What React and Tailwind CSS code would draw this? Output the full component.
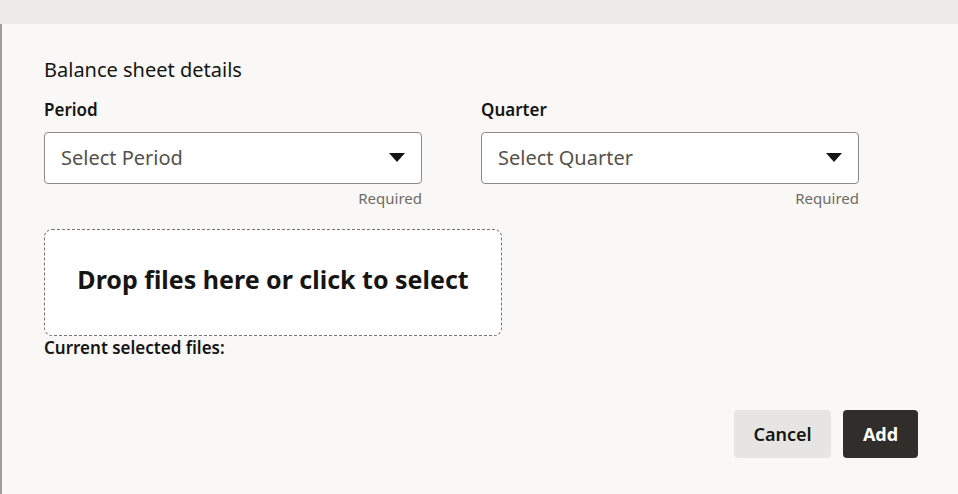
import React from "react";

function Caret() {
  return (
    <svg width="16" height="10" viewBox="0 0 16 10" className="shrink-0">
      <path d="M0 0 L16 0 L8 9 Z" fill="#161513" />
    </svg>
  );
}

function SelectField({ label, placeholder }) {
  return (
    <div className="flex flex-col w-[378px]">
      <div className="text-[17px] font-semibold text-[#161513] leading-[20px] mb-[12px]">{label}</div>
      <div className="h-[52px] bg-white border border-[#8d8b89] rounded-[4px] flex items-center justify-between pl-[16px] pr-[16px]">
        <span className="text-[20px] text-[#55514d]">{placeholder}</span>
        <Caret />
      </div>
      <div className="text-right text-[15px] text-[#6f6b67] leading-[20px] mt-[4px]">Required</div>
    </div>
  );
}

export default function App() {
  return (
    <div className="w-[958px] h-[494px] flex flex-col overflow-hidden" style={{ fontFamily: '"Noto Sans", "Open Sans", sans-serif' }}>
      <div className="h-[24px] bg-[#ecebea] shrink-0" />
      <div className="flex-1 bg-[#f9f8f6] border-l-2 border-[#a09e9c] pl-[42px] pr-[40px] flex flex-col">
        <div className="text-[20px] text-[#161513] mt-[33px] leading-[26px]">Balance sheet details</div>
        <div className="flex gap-[59px] mt-[17px]">
          <SelectField label="Period" placeholder="Select Period" />
          <SelectField label="Quarter" placeholder="Select Quarter" />
        </div>
        <div className="mt-[21px] w-[458px] h-[107px] bg-white border border-dashed border-[#77736f] rounded-[8px] flex items-center justify-center pb-[6px]">
          <span className="text-[25px] font-bold text-[#161513]">Drop files here or click to select</span>
        </div>
        <div className="text-[17px] font-semibold text-[#161513] leading-[22px] mt-[1px]">Current selected files:</div>
        <div className="flex justify-end gap-[12px] mt-[51px]">
          <button className="h-[48px] w-[97px] rounded-[4px] bg-[#e7e5e4] text-[18px] font-semibold text-[#161513]">Cancel</button>
          <button className="h-[48px] w-[75px] rounded-[4px] bg-[#312d2a] text-[18px] font-bold text-white">Add</button>
        </div>
      </div>
    </div>
  );
}
